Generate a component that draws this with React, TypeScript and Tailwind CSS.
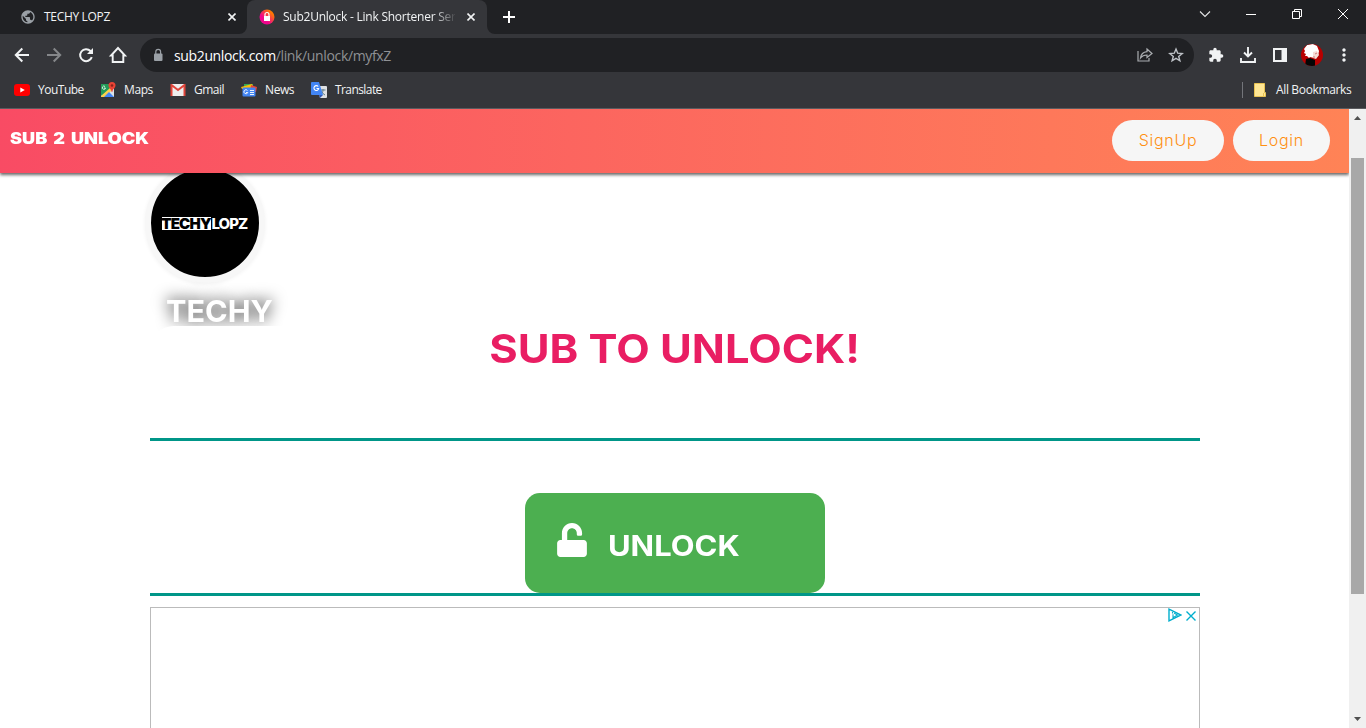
import React from 'react';
import { MdExtension, MdMoreVert, MdPublic } from 'react-icons/md';
import { FaUnlock } from 'react-icons/fa';

function Cross({ className }: { className: string }) {
  return (
    <svg viewBox="0 0 8 8" className={className} fill="none" stroke="currentColor" strokeWidth="1.6">
      <path d="M.5.5l7 7M7.5.5l-7 7" />
    </svg>
  );
}

function TabStrip() {
  return (
    <div className="flex h-[34px] bg-[#202124] text-[12px] text-[#f1f3f4]">
      <div className="flex w-[247px] items-center pl-5">
        <MdPublic className="size-4 shrink-0 text-[#9aa0a6]" />
        <span className="ml-2 w-[184px] whitespace-nowrap tracking-[-0.32px]">TECHY LOPZ</span>
        <Cross className="size-2 shrink-0" />
      </div>
      <div className="relative flex w-60 items-center rounded-t-lg bg-[#35363a] pl-3">
        <svg className="absolute bottom-0 -left-2 size-2" viewBox="0 0 8 8">
          <path d="M8 0v8H0a8 8 0 0 0 8-8z" fill="#35363a" />
        </svg>
        <svg className="absolute -right-2 bottom-0 size-2" viewBox="0 0 8 8">
          <path d="M0 0v8h8a8 8 0 0 1-8-8z" fill="#35363a" />
        </svg>
        <svg viewBox="0 0 16 16" className="size-4 shrink-0">
          <linearGradient id="favicon" x1="0" y1="1" x2="1" y2="0">
            <stop offset=".35" stopColor="#f0058c" />
            <stop offset=".8" stopColor="#ff7a00" />
          </linearGradient>
          <circle cx="8" cy="8" r="7.500" fill="url(#favicon)" />
          <path d="M5 7h6v5H5z" fill="#fff" />
          <path d="M6 7.500V5.500a2 2 0 0 1 4 0v2" fill="none" stroke="#fff" strokeWidth="1.200" />
        </svg>
        <span className="ml-2 w-[172px] whitespace-nowrap tracking-[-0.24px] [mask-image:linear-gradient(to_right,black_150px,transparent_174px)]">
          Sub2Unlock - Link Shortener Ser
        </span>
        <Cross className="ml-3 size-2 shrink-0" />
      </div>
      <svg viewBox="0 0 12 12" className="mt-[11px] ml-4 size-3" stroke="white" strokeWidth="2">
        <path d="M6 0v12M0 6h12" />
      </svg>
      <div className="ml-auto flex items-start pt-2">
        <svg viewBox="0 0 12 12" className="mr-[34px] size-3" fill="none" stroke="#e4e5e6" strokeWidth="1.100">
          <path d="M1 3.5l5 5 5-5" />
        </svg>
        <svg viewBox="0 0 12 12" className="mr-[34px] size-3" fill="none" stroke="white">
          <path d="M1 6.5h10" />
        </svg>
        <svg viewBox="0 0 12 12" className="mr-[34px] size-3" fill="none" stroke="white">
          <path d="M1.5 3.5h7v7h-7zM3.5 3.500v-2h7v7h-2" />
        </svg>
        <svg viewBox="0 0 12 12" className="mr-[17px] size-3" fill="none" stroke="white">
          <path d="M1 1l10 10M11 1L1 11" />
        </svg>
      </div>
    </div>
  );
}

function Avatar() {
  return (
    <svg viewBox="0 0 22 22" className="size-[22px]">
      <clipPath id="avatar">
        <circle cx="11" cy="11" r="11" />
      </clipPath>
      <g clipPath="url(#avatar)">
        <path d="M0 0h22v22H0z" fill="#b80000" />
        <path d="M6 1l6-1 4 2 2 5-1 5-4 2-4-1-1 1-2-2-2 0 1-2-2-1 1-2-1-2z" fill="#fff" />
        <path d="M12 8l4-1 2 4-3 4-3-1z" fill="#f6dcd7" />
        <path d="M14 10l2-1M13 12v2" stroke="#bd5750" strokeWidth=".7" />
        <path d="M5 15l4-1 5 2 0 6H4z" fill="#050505" />
      </g>
    </svg>
  );
}

function Toolbar() {
  return (
    <div className="flex h-[38px] items-center pt-1 text-[#f1f3f4]">
      <svg viewBox="0 0 20 20" className="ml-3 size-5" fill="none" stroke="currentColor" strokeWidth="2">
        <path d="M17 10H4.500M10.300 3.500L3.800 10l6.500 6.500" />
      </svg>
      <svg viewBox="0 0 20 20" className="ml-3 size-5 text-[#85878a]" fill="none" stroke="currentColor" strokeWidth="2">
        <path d="M3 10h12.500M9.700 3.500l6.500 6.500-6.500 6.500" />
      </svg>
      <svg viewBox="0 0 20 20" className="ml-3 size-5" fill="none" stroke="currentColor" strokeWidth="2">
        <path d="M15.800 12.200A6 6 0 1 1 14.500 6L15.500 7.200" />
        <path d="M17 3v6h-6z" fill="currentColor" stroke="none" />
      </svg>
      <svg viewBox="0 0 20 20" className="ml-3 size-5" fill="none" stroke="currentColor" strokeWidth="1.9">
        <path d="M3 10.500H4.700V17h10.600v-6.500H17L10 3z" />
      </svg>
      <div className="ml-3 flex h-[34px] w-[1054px] items-center rounded-full bg-[#202124] pr-2.5 pl-[11px]">
        <svg viewBox="0 0 14 14" className="size-3.5 text-[#9aa0a6]">
          <rect x="3" y="5.500" width="8.500" height="7.500" rx="1" fill="currentColor" />
          <path d="M4.800 6V3.800a2.400 2.400 0 0 1 4.800 0V6" fill="none" stroke="currentColor" strokeWidth="1.200" />
        </svg>
        <span className="ml-[9px] text-[14px] tracking-[-0.36px] text-[#8f9194]">
          <span className="text-white">sub2unlock.com</span>/link/unlock/myfxZ
        </span>
        <svg viewBox="0 0 16 16" className="ml-auto size-4" fill="none" stroke="#aaadb1" strokeWidth="1.200">
          <path d="M1 4v10h11v-3M10 2l5 4.500-5 4V8C7 8 5 9 3.500 11 4 7 6.500 5 10 4.700z" />
        </svg>
        <svg viewBox="0 0 16 16" className="ml-[15px] size-4" fill="none" stroke="#bdc1c6" strokeWidth="1.400">
          <path d="M8 2l1.700 4.200 4.500.3-3.500 2.900 1.200 4.400L8 11.400l-3.900 2.400 1.200-4.400L1.800 6.500l4.500-.3z" />
        </svg>
      </div>
      <MdExtension className="ml-3.5 size-4" />
      <svg viewBox="0 0 16 16" className="ml-4 size-4" fill="none" stroke="currentColor" strokeWidth="1.900">
        <path d="M8 0v9M4 5.500l4 4 4-4M1 11v4h14v-4" />
      </svg>
      <svg viewBox="0 0 14 14" className="ml-[17px] size-3.5" fill="none" stroke="currentColor" strokeWidth="2">
        <path d="M1 1h12v12H1z" />
        <path d="M8.500 1H13v12H8.500z" fill="currentColor" stroke="none" />
      </svg>
      <span className="ml-[14px]">
        <Avatar />
      </span>
      <MdMoreVert className="ml-[11px] size-5" />
    </div>
  );
}

function Bookmarks() {
  return (
    <div className="flex h-9 items-center text-[12px] whitespace-nowrap text-[#f1f3f4]">
      <svg viewBox="0 0 16 12" className="ml-3.5 h-3 w-4">
        <rect width="16" height="12" rx="3" fill="#f00" />
        <path d="M6.300 3.500l4.500 2.500-4.500 2.500z" fill="#fff" />
      </svg>
      <span className="ml-2 w-[47px] tracking-[-0.5px]">YouTube</span>
      <svg viewBox="0 0 16 16" className="ml-[15px] size-4">
        <path d="M1 2h13v13H1z" fill="#dce3e8" />
        <path d="M1 2h9v6l-9 6z" fill="#239b58" />
        <path d="M1 14L10 6l2 2-7 7H1z" fill="#fdd04c" />
        <path d="M4 15l5-5 5 5z" fill="#4285f4" />
        <path d="M5 4.500a1.600 1.600 0 1 0 .5 1.500H4" stroke="#fff" fill="none" strokeWidth=".8" />
        <path d="M12 0a3.500 3.500 0 0 0-3.500 3.500c0 2.500 2.500 3 3.200 6.500h.6c.7-3.500 3.200-4 3.200-6.500A3.500 3.500 0 0 0 12 0z" fill="#ea4335" />
        <circle cx="12" cy="3.500" r="1.300" fill="#8b231b" />
      </svg>
      <span className="ml-2 w-[30px] tracking-[-0.4px]">Maps</span>
      <svg viewBox="0 0 16 12" className="ml-4 h-3 w-4">
        <rect x="1" width="14" height="12" rx="1" fill="#eee" />
        <path d="M1.500 12V1L8 6l6.500-5v11" fill="none" stroke="#e0443a" strokeWidth="2" />
      </svg>
      <span className="ml-2 w-[31px] tracking-[-0.5px]">Gmail</span>
      <svg viewBox="0 0 16 14" className="ml-4 h-3.5 w-4">
        <path d="M3 1h9v5H3z" fill="#34a853" />
        <path d="M0 4l11-3 2 5H1z" fill="#fbbc04" />
        <path d="M10 2l6 2-1 5H9z" fill="#ea4335" />
        <rect x="1.500" y="4.500" width="13" height="9" rx="1" fill="#4285f4" />
        <path d="M6.500 7.500a2 2 0 1 0 .3 2H5M9 7.500h4M9 9.500h4M9 11.500h4" stroke="#fff" fill="none" strokeWidth=".9" />
      </svg>
      <span className="ml-2 w-[30px] tracking-[-0.4px]">News</span>
      <svg viewBox="0 0 16 16" className="ml-4 size-4">
        <path d="M6 4h9a1 1 0 0 1 1 1v10a1 1 0 0 1-1 1H9z" fill="#dfe1e4" />
        <path d="M9.500 8h5M12 7v1c0 2-1 4-2.500 5M10.500 9c.7 2 2 3 3.500 4" stroke="#607d8b" fill="none" />
        <path d="M1 0h7l4 13H1a1 1 0 0 1-1-1V1a1 1 0 0 1 1-1z" fill="#4285f4" />
        <path d="M7.200 4.500a2.400 2.400 0 1 0 .5 2H5.500" stroke="#fff" fill="none" strokeWidth="1.100" />
        <path d="M8 13h4l-3 3z" fill="#3057b4" />
      </svg>
      <span className="ml-2 tracking-[-0.58px]">Translate</span>
      <span className="ml-auto h-4 w-px bg-[#73757a]" />
      <svg viewBox="0 0 12 14" className="ml-[11px] h-3.5 w-3">
        <path d="M.5.5h10v9h1v4H.5z" fill="#ffe694" stroke="#e8c252" />
        <path d="M9.500 10v3.500" stroke="#e8c252" />
      </svg>
      <span className="mr-[14px] ml-2.5 w-[76px] tracking-[-0.35px]">All Bookmarks</span>
    </div>
  );
}

function SiteHeader() {
  return (
    <header className="relative z-10 flex h-16 shrink-0 items-start bg-gradient-to-r from-[#f94b64] to-[#ff8356] shadow-[0_2px_3px_rgba(0,0,0,0.6)]">
      <div className="mt-5 ml-2.5 origin-left scale-x-[1.17] text-[15.500px] leading-5 font-black whitespace-nowrap text-white [word-spacing:2px]">
        SUB 2 UNLOCK
      </div>
      <div className="mt-[11px] mr-[19px] ml-auto flex gap-[9px] text-[16px] font-light text-[#ff8f12]">
        <button className="h-[41px] w-28 rounded-full bg-[#f6f6f6] pb-px tracking-[0.7px]">SignUp</button>
        <button className="h-[41px] w-[97px] rounded-full bg-[#f6f6f6] pb-px tracking-[0.7px]">Login</button>
      </div>
    </header>
  );
}

function Scrollbar() {
  return (
    <div className="flex w-[17px] shrink-0 flex-col items-center bg-[#f0f0f0]">
      <svg viewBox="0 0 7 4" className="mt-[7px] h-1 w-[7px]">
        <path d="M0 4L3.500 0 7 4z" fill="#505050" />
      </svg>
      <div className="mt-[38px] h-[436px] w-[13px] bg-[#a8a8a8]" />
      <svg viewBox="0 0 7 4" className="mt-auto mb-[7px] h-1 w-[7px]">
        <path d="M0 0l3.500 4L7 0z" fill="#505050" />
      </svg>
    </div>
  );
}

export default function App() {
  return (
    <div className="flex h-[728px] w-[1366px] flex-col overflow-hidden bg-[#35363a] font-['Open_Sans','Noto_Sans',sans-serif]">
      <TabStrip />
      <Toolbar />
      <Bookmarks />
      <div className="h-px shrink-0 bg-[#5a5b5f]" />
      <div className="flex min-h-0 flex-1">
        <div className="flex w-[1349px] flex-col overflow-hidden bg-white font-['Inter',sans-serif]">
          <SiteHeader />
          <main className="ml-[150px] flex w-[1050px] flex-col">
            <div className="-mt-[10px] -ml-[5px] flex size-[120px] shrink-0 items-center justify-center rounded-full border-[6px] border-[#f7f7f7] bg-black shadow-[0_1px_4px_rgba(0,0,0,0.06)]">
              <div className="mr-0.5 flex items-center text-[15px] leading-[13px] font-extrabold">
                <span className="flex h-[13px] w-[49px] items-center justify-center bg-white font-black tracking-[-0.8px] text-black">
                  TECHY
                </span>
                <span className="w-[36px] pl-px tracking-[-1px] text-white">LOPZ</span>
              </div>
            </div>
            <div className="h-[43px] shrink-0 pt-[9px] pl-4">
              <div className="w-fit origin-left scale-x-[1.02] text-[30px] leading-[38px] font-bold text-white [text-shadow:0_0_16px_rgba(0,0,0,1)]">
                TECHY
              </div>
            </div>
            <section className="relative flex h-[115px] shrink-0 justify-center rounded-[24px_24px_0_0] bg-white">
              <h1 className="mt-[-2px] h-[50px] scale-x-[1.087] text-[40px] leading-[50px] font-bold whitespace-nowrap text-[#e91e63]">
                SUB TO UNLOCK!
              </h1>
              <div className="absolute bottom-0 h-[3px] w-full bg-[#009688]" />
            </section>
            <div className="flex h-[155px] shrink-0 justify-center border-b-[3px] border-[#009688] pt-[52px]">
              <button className="flex h-[100px] w-[300px] rounded-[15px] bg-[#4caf50] pl-8 text-white">
                <FaUnlock className="mt-[30px] h-[34px] w-[30px]" />
                <span className="mt-[34px] ml-[21px] origin-left scale-x-[1.065] text-[29px] leading-[38px] font-bold">
                  UNLOCK
                </span>
              </button>
            </div>
            <div className="mt-[11px] flex h-[130px] shrink-0 items-start justify-end border border-[#bbb] text-[#00aecd]">
              <svg viewBox="0 0 14 14" className="mr-1 size-3.5" fill="none" stroke="currentColor" strokeWidth="1.400">
                <path d="M1 1.200v11.600L13 7z" />
                <path d="M4.500 4v1.500M5 6.200v3.600L9.500 7 6 5" strokeWidth="1.100" />
              </svg>
              <svg viewBox="0 0 10 10" className="mt-[3px] mr-[3px] size-2.5" stroke="currentColor" strokeWidth="1.400">
                <path d="M.5.5l9 9M9.500.5l-9 9" />
              </svg>
            </div>
          </main>
        </div>
        <Scrollbar />
      </div>
    </div>
  );
}
